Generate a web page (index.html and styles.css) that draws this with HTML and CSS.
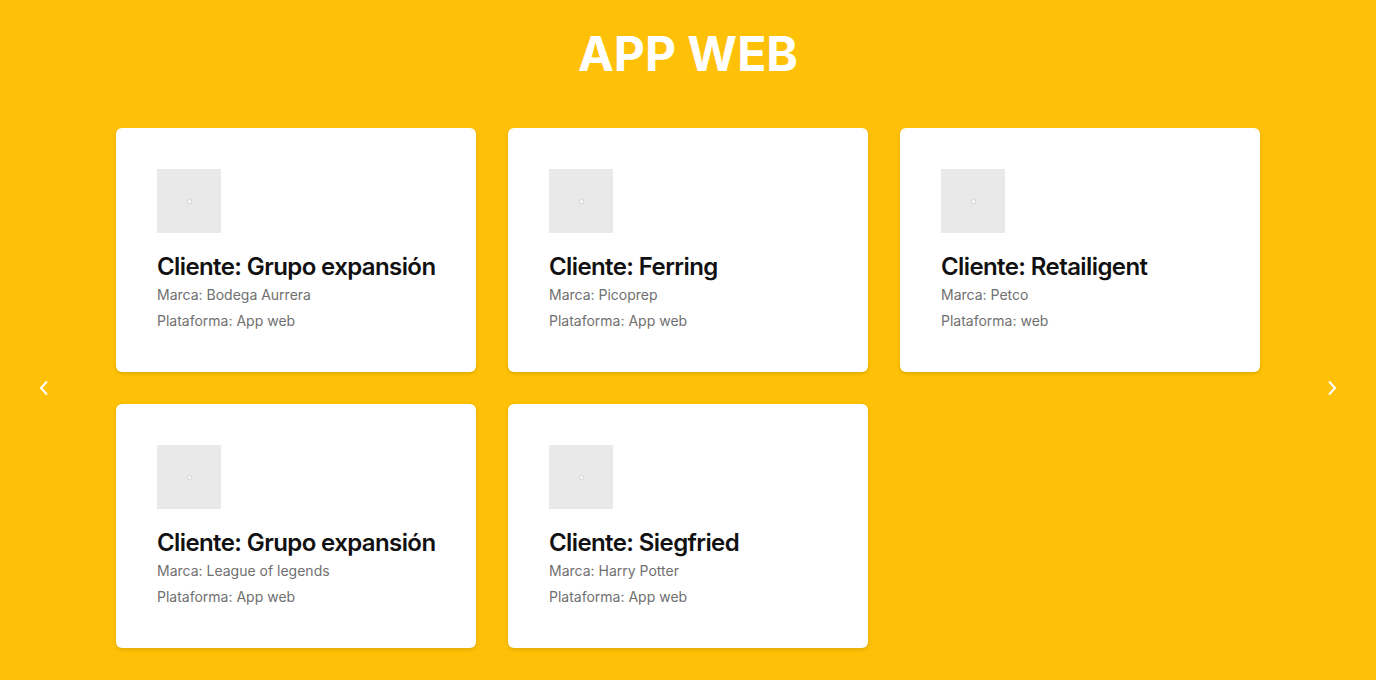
FILE: index.html
```html
<!DOCTYPE html>
<html lang="es">
<head>
<meta charset="utf-8">
<title>App Web</title>
<link rel="stylesheet" href="styles.css">
</head>
<body>
<section class="section">
  <h1 class="section-title">APP WEB</h1>
  <div class="carousel">
    <button class="arrow" aria-label="Anterior">
      <svg width="10" height="16" viewBox="0 0 10 16"><path d="M7.5 2 L2 8 L7.5 14" fill="none" stroke="#fff" stroke-width="2" stroke-linecap="round" stroke-linejoin="round"/></svg>
    </button>
    <div class="grid">
      <div class="card">
        <div class="thumb"><span class="dot"></span></div>
        <h2 class="card-title">Cliente: Grupo expansión</h2>
        <p class="card-meta">Marca: Bodega Aurrera</p>
        <p class="card-meta">Plataforma: App web</p>
      </div>
      <div class="card">
        <div class="thumb"><span class="dot"></span></div>
        <h2 class="card-title">Cliente: Ferring</h2>
        <p class="card-meta">Marca: Picoprep</p>
        <p class="card-meta">Plataforma: App web</p>
      </div>
      <div class="card">
        <div class="thumb"><span class="dot"></span></div>
        <h2 class="card-title">Cliente: Retailigent</h2>
        <p class="card-meta">Marca: Petco</p>
        <p class="card-meta">Plataforma: web</p>
      </div>
      <div class="card">
        <div class="thumb"><span class="dot"></span></div>
        <h2 class="card-title">Cliente: Grupo expansión</h2>
        <p class="card-meta">Marca: League of legends</p>
        <p class="card-meta">Plataforma: App web</p>
      </div>
      <div class="card">
        <div class="thumb"><span class="dot"></span></div>
        <h2 class="card-title">Cliente: Siegfried</h2>
        <p class="card-meta">Marca: Harry Potter</p>
        <p class="card-meta">Plataforma: App web</p>
      </div>
    </div>
    <button class="arrow" aria-label="Siguiente">
      <svg width="10" height="16" viewBox="0 0 10 16"><path d="M2.5 2 L8 8 L2.5 14" fill="none" stroke="#fff" stroke-width="2" stroke-linecap="round" stroke-linejoin="round"/></svg>
    </button>
  </div>
</section>
</body>
</html>
```
FILE: styles.css
```css
html, body {
  margin: 0;
  padding: 0;
}
body {
  background: #ffc107;
  font-family: Inter, "Noto Sans", sans-serif;
  height: 680px;
  overflow: hidden;
}
.section {
  padding-top: 30px;
}
.section-title {
  margin: 0 0 50px;
  text-align: center;
  color: #fff;
  font-size: 48px;
  line-height: 48px;
  font-weight: 700;
  letter-spacing: 0;
}
.carousel {
  display: flex;
  align-items: center;
  justify-content: space-between;
  padding: 0 24px;
}
.arrow {
  width: 40px;
  height: 40px;
  border: 0;
  background: transparent;
  padding: 0;
  display: flex;
  align-items: center;
  justify-content: center;
  cursor: pointer;
}
.grid {
  width: 1144px;
  display: grid;
  grid-template-columns: repeat(3, minmax(0, 1fr));
  gap: 32px;
}
.card {
  background: #fff;
  border-radius: 6px;
  box-shadow: 0 2px 4px rgba(0, 0, 0, 0.12);
  padding: 41px;
  height: 244px;
  box-sizing: border-box;
  min-width: 0;
}
.thumb {
  width: 64px;
  height: 64px;
  background: #e9e9e9;
  display: flex;
  align-items: center;
  justify-content: center;
}
.dot {
  width: 3px;
  height: 3px;
  border-radius: 50%;
  background: #fff;
  box-shadow: 0 0 0 1px #d6d6d6;
}
.card-title {
  margin: 18px 0 2px;
  font-size: 24px;
  line-height: 32px;
  font-weight: 600;
  color: #111;
  letter-spacing: -0.6px;
  white-space: nowrap;
}
.card-meta {
  margin: 0 0 6px;
  font-size: 14px;
  line-height: 20px;
  color: #707070;
}
```
